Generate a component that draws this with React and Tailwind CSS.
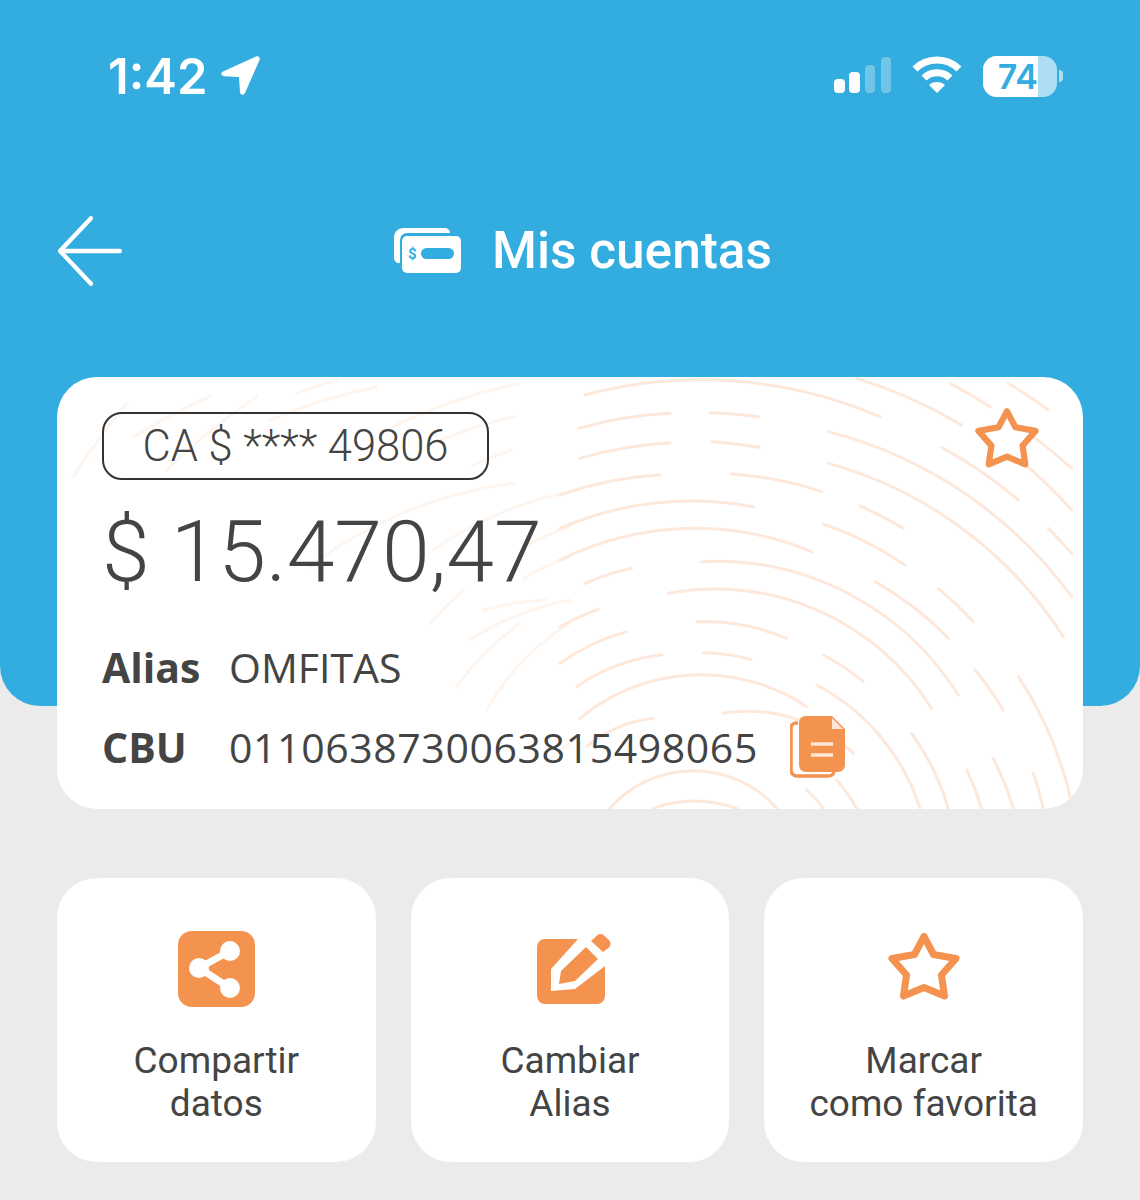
import React from 'react';

const roboto = { fontFamily: 'Roboto, sans-serif' };

// fingerprint strokes, taken from two crops of the card: [x1, y1, x2, y2, radius?]
const rightStrokes = [
  [75, 75, 960, 140], [890, 25, 1205, 165], [1170, 40, 1290, 110], [1345, 40, 1465, 120],
  [55, 175, 330, 130], [450, 128, 595, 140], [60, 265, 330, 218], [455, 215, 598, 232],
  [0, 375, 300, 315], [515, 312, 785, 365], [805, 185, 1535, 680], [805, 280, 1510, 800],
  [1145, 232, 1375, 390], [1420, 200, 1535, 295], [1380, 270, 1535, 420], [1465, 475, 1535, 550],
  [900, 408, 1030, 475], [790, 462, 1035, 585], [0, 475, 580, 410], [0, 570, 755, 545],
  [425, 575, 1195, 975], [945, 635, 1165, 805], [1135, 655, 1240, 755],
  [75, 640, 215, 595], [0, 770, 115, 718], [0, 880, 200, 785], [50, 950, 305, 855],
  [325, 670, 1115, 1015], [410, 755, 680, 805], [430, 848, 572, 868], [790, 855, 910, 935],
  [1245, 900, 1330, 1020], [1375, 920, 1535, 1300], [60, 1045, 740, 1010, 190], [770, 945, 1080, 1315],
  [80, 1130, 280, 1045], [490, 1030, 880, 1150], [1055, 1090, 1165, 1315], [1220, 1200, 1265, 1315],
  [1300, 1165, 1360, 1315], [1420, 1210, 1450, 1315], [150, 1315, 650, 1315, 111], [280, 1315, 530, 1315, 125],
  [740, 1260, 790, 1315], [830, 1230, 890, 1315],
].map(([a, b, c, d, r]) => [503 + a / 3, b / 3 - 7, 503 + c / 3, d / 3 - 7, r]);

const leftStrokes = [
  [1030, 170, 1405, 42], [1160, 215, 1395, 140], [1270, 285, 1385, 240], [780, 590, 1390, 340],
  [1150, 540, 1560, 365], [1420, 530, 1560, 470], [1420, 625, 1560, 560], [1300, 720, 1490, 690],
  [660, 150, 980, 50], [740, 70, 860, 30], [350, 300, 620, 80], [250, 200, 480, 80], [70, 320, 230, 100],
  [1260, 810, 1560, 690], [1140, 760, 1240, 660], [1220, 950, 1410, 760], [1310, 1020, 1560, 760],
  [1490, 1180, 1560, 1120],
].map(([a, b, c, d]) => [a / 3 - 7, b / 3 - 7, c / 3 - 7, d / 3 - 7]);

const arcPath = ([x1, y1, x2, y2, radius]) => {
  const r = radius || (Math.hypot(x1 - 633, y1 - 455) + Math.hypot(x2 - 633, y2 - 455)) / 2;
  return `M${x1} ${y1}A${r} ${r} 0 0 1 ${x2} ${y2}`;
};

const StarIcon = ({ className }) => (
  <svg viewBox="0 0 74 69" className={className} fill="none" stroke="#f4934f" strokeWidth="7" strokeLinejoin="round">
    <path d="M37 4.500 46.500 22.500 69 26.500 54.500 43 57.500 64 37 55.500 16.500 64 19.500 43 5 26.500 27.500 22.500Z" />
  </svg>
);

const ShareIcon = () => (
  <svg viewBox="0 0 77 76" className="w-[77px] h-[76px]">
    <rect width="77" height="76" rx="14" fill="#f4934f" />
    <path d="M21 37 52 20M21 37 52 57" stroke="#fff" strokeWidth="7" />
    <circle cx="21" cy="37" r="10" fill="#fff" />
    <circle cx="52" cy="20" r="10" fill="#fff" />
    <circle cx="52" cy="57" r="10" fill="#fff" />
  </svg>
);

const EditIcon = () => (
  <svg viewBox="0 0 74 71" className="ml-[7px] w-[74px] h-[71px]" fill="#f4934f" strokeLinejoin="round">
    <path d="M8 5H41L14 35V57L38 55 68 32V62A8 8 0 0 1 60 70H8A8 8 0 0 1 0 62V13A8 8 0 0 1 8 5Z" />
    <path d="M22 50 24 37 49 13 61 25 38 47Z" />
    <path d="M54 7 60 1.500A5.500 5.500 0 0 1 67 1.500L72 6A5.500 5.500 0 0 1 72 13.500L66 18Z" />
  </svg>
);

const ActionButton = ({ icon, lines }) => (
  <div className="flex-1 h-[284px] bg-white rounded-[40px] flex flex-col items-center">
    <div className="h-[74px] mt-[54px] flex items-center justify-center">{icon}</div>
    <p className="mt-[33px] text-center text-[37px] leading-[43px] text-[#444]" style={roboto}>
      {lines[0]}<br />{lines[1]}
    </p>
  </div>
);

const App = () => {
  return (
    <div className="w-[1140px] h-[1200px] bg-[#ebebeb] overflow-hidden">
      <header className="h-[706px] bg-[#33ade0] rounded-b-[40px] text-white">
        {/* status bar */}
        <div className="h-[96px] pt-[56px] pl-[108px] pr-[77px] flex items-center justify-between">
          <div className="flex items-center gap-[12px]">
            <span className="text-[49px] leading-none font-semibold" style={{ fontFamily: 'Inter, sans-serif' }}>1:42</span>
            <svg viewBox="0 0 40 40" className="w-[40px] h-[40px]" fill="#fff">
              <path d="M36 .5 3 15.500C.5 16.800 1 20 4 20.200L19 21 20 36C20.300 39.200 23.500 39.800 25 37L39.500 4C40.500 1.500 38.500-.5 36 .5Z" />
            </svg>
          </div>
          <div className="flex items-center">
            <svg viewBox="0 0 58 38" className="mb-[2px] w-[58px] h-[38px]" fill="#fff">
              <rect y="23" width="11" height="14" rx="4" />
              <rect x="15" y="16" width="11" height="21" rx="4" />
              <rect x="31" y="9" width="10" height="28" rx="4" opacity="0.3" />
              <rect x="47" y="1" width="10" height="36" rx="4" opacity="0.3" />
            </svg>
            <svg viewBox="0 0 50 38" className="mb-[2px] ml-[20px] w-[50px] h-[38px]" fill="none" stroke="#fff" strokeWidth="7">
              <path d="M3 13C15 1 35 1 47 13" />
              <path d="M12 22C19 15 31 15 38 22" />
              <path d="M25 37 17 29C21 25 29 25 33 29Z" fill="#fff" stroke="none" />
            </svg>
            <div className="ml-[21px] flex items-center gap-[2px]">
              <div className="w-[74px] h-[41px] rounded-[14px] bg-white/60 overflow-hidden">
                <div className="w-[55px] h-full bg-white flex items-center justify-end text-[#33ade0] text-[34px] font-semibold whitespace-nowrap" style={{ fontFamily: 'Inter, sans-serif' }}>
                  74
                </div>
              </div>
              <div className="w-[4px] h-[12px] rounded-r-full bg-white/60" />
            </div>
          </div>
        </div>

        {/* title */}
        <div className="mt-[118px] h-[72px] relative flex items-center justify-center pl-[26px]">
          <svg viewBox="0 0 64 62" className="absolute left-[58px] top-[2px] w-[64px] h-[70px]" preserveAspectRatio="none" fill="none" stroke="#fff" strokeWidth="4" strokeLinecap="round" strokeLinejoin="round">
            <path d="M2 31H62M33 2 2 31 33 60" />
          </svg>
          <svg viewBox="0 0 67 45" className="w-[67px] h-[45px] mr-[31px]">
            <path d="M9 0H51A5 5 0 0 1 56 5H13A7 7 0 0 0 6 12V35A5 5 0 0 1 0 30V9A9 9 0 0 1 9 0Z" fill="#fff" />
            <rect x="8" y="8" width="59" height="37" rx="5" fill="#fff" />
            <rect x="27" y="20" width="33" height="11" rx="5.500" fill="#33ade0" />
            <text x="14" y="31" fontSize="15" fontWeight="700" fill="#33ade0" fontFamily="Roboto, sans-serif">$</text>
          </svg>
          <h1 className="mt-[2px] text-[51.4px] leading-none font-medium" style={roboto}>Mis cuentas</h1>
        </div>
      </header>

      <main className="mx-[57px] mt-[-329px] relative">
        <section className="relative h-[432px] bg-white rounded-[40px] overflow-hidden text-[#444]">
          <svg viewBox="0 0 1026 432" className="absolute inset-0 w-full h-full" fill="none" strokeWidth="3" strokeLinecap="round">
            {leftStrokes.map((s, i) => <path key={i} d={arcPath(s)} stroke="#fef5ee" />)}
            {rightStrokes.map((s, i) => <path key={i} d={arcPath(s)} stroke="#fde9dc" />)}
          </svg>

          <div className="relative pt-[35px] pl-[45px]">
            <div className="w-[387px] h-[68px] pt-[1px] border-2 border-[#333] rounded-[20px] flex items-center justify-center text-[43.5px] font-light" style={roboto}>
              CA $ **** 49806
            </div>
            <p className="mt-[22px] text-[86px] leading-[100px] font-light" style={roboto}>$ 15.470,47</p>
            <div className="mt-[38px] flex items-center h-[56px] text-[41px]" style={{ fontFamily: '"Open Sans", sans-serif' }}>
              <span className="w-[127px] font-bold">Alias</span>
              <span>OMFITAS</span>
            </div>
            <div className="mt-[24px] flex items-center h-[56px] text-[41px]" style={{ fontFamily: '"Open Sans", sans-serif' }}>
              <span className="w-[127px] font-bold">CBU</span>
              <span className="tracking-[0.6px]">0110638730063815498065</span>
              <svg viewBox="0 0 56 63" className="mb-[3px] ml-[32px] w-[56px] h-[63px]">
                <path d="M8 8H6A5 5 0 0 0 1 13V55A6 6 0 0 0 7 61H38A6 6 0 0 0 44 57" fill="none" stroke="#f4934f" strokeWidth="3.500" />
                <path d="M15 1H42L55 14V50A7 7 0 0 1 48 57H15A7 7 0 0 1 9 50V7A7 7 0 0 1 15 1Z" fill="#f4934f" />
                <path d="M42 3 53 14H42Z" fill="#fde6d6" />
                <path d="M21 29H43M21 40H43" stroke="#fde6d6" strokeWidth="3.500" />
              </svg>
            </div>
          </div>

          <StarIcon className="absolute right-[43px] top-[30px] w-[66px] h-[62px]" />
        </section>

        <div className="mt-[69px] flex gap-[35px]">
          <ActionButton icon={<ShareIcon />} lines={['Compartir', 'datos']} />
          <ActionButton icon={<EditIcon />} lines={['Cambiar', 'Alias']} />
          <ActionButton icon={<StarIcon className="mb-[5px] w-[74px] h-[69px]" />} lines={['Marcar', 'como favorita']} />
        </div>
      </main>
    </div>
  );
};

export default App;
